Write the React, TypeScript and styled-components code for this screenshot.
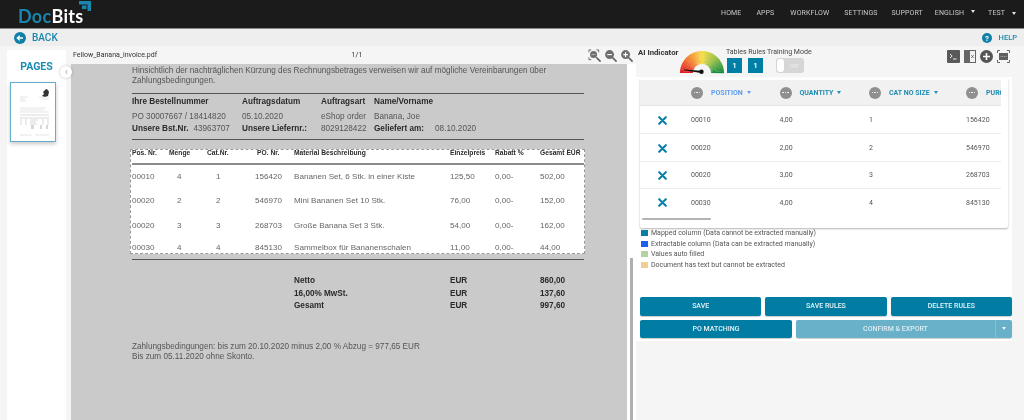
import React from 'react'
import styled, { createGlobalStyle } from 'styled-components'

const GlobalStyle = createGlobalStyle`
  html, body {
    margin: 0;
    padding: 0;
    background: #f5f5f5;
  }
  * {
    box-sizing: border-box;
  }
`

const Shell = styled.div`
  width: 1024px;
  height: 420px;
  overflow: hidden;
  display: flex;
  flex-direction: column;
  font-family: Roboto, "Liberation Sans", sans-serif;
  background: #f5f5f5;
  filter: blur(0.45px);
`

const TopBar = styled.header`
  height: 29px;
  flex-shrink: 0;
  display: flex;
  align-items: center;
  justify-content: space-between;
  padding: 0 8px 2px 18px;
  background: #1b1b1b;
  border-bottom: 1px solid #8a8a8a;
`

const Logo = styled.div`
  position: relative;
  font-family: Lato, "Liberation Sans", sans-serif;
  font-size: 18px;
  font-weight: 700;
  letter-spacing: 0.3px;
  line-height: 18px;
  margin-top: 5px;
  color: #fff;

  span {
    color: #1a86ad;
  }

  svg {
    position: absolute;
    top: -6px;
    right: -7px;
  }
`

const Nav = styled.nav`
  display: flex;
  align-items: center;
  color: #c8c8c8;
  font-size: 7px;
  letter-spacing: 0.1px;
`

const NavLink = styled.span<{ $gap: number }>`
  margin-left: ${({ $gap }) => $gap}px;
  display: flex;
  align-items: center;
`

const NavCaret = styled.i<{ $lift?: boolean }>`
  width: 0;
  height: 0;
  margin-left: 7px;
  margin-top: ${({ $lift }) => ($lift ? -4 : 0)}px;
  border-left: 2.5px solid transparent;
  border-right: 2.5px solid transparent;
  border-top: 3px solid #e4e4e4;
`

const SubBar = styled.div`
  height: 17px;
  flex-shrink: 0;
  display: flex;
  align-items: center;
  justify-content: space-between;
  padding: 0 7px 0 14px;
  background: #eeeeee;
`

const SubAction = styled.div<{ $small?: boolean }>`
  display: flex;
  align-items: center;
  gap: ${({ $small }) => ($small ? 7 : 6)}px;
  color: #1a86ad;
  font-size: ${({ $small }) => ($small ? 7.5 : 10)}px;
  font-weight: 500;
`

const Main = styled.main`
  flex: 1;
  min-height: 0;
  display: flex;
`

const Sidebar = styled.aside`
  position: relative;
  width: 59px;
  margin: 4px 0 0 7px;
  padding: 11px 3px 0;
  background: #ffffff;
  flex-shrink: 0;
`

const PagesTitle = styled.div`
  text-align: center;
  color: #1a8cb3;
  font-size: 10.5px;
  font-weight: 700;
  line-height: 12px;
  margin-bottom: 9px;
`

const Thumb = styled.div`
  width: 46px;
  height: 60px;
  background: #fff;
  border: 1px solid #63aecb;
  box-shadow: 0 2px 4px rgba(0, 0, 0, 0.22);

  svg {
    display: block;
  }
`

const Collapse = styled.button`
  position: absolute;
  top: 16px;
  right: -6px;
  width: 12px;
  height: 12px;
  padding: 0;
  border: none;
  border-radius: 50%;
  background: #fff;
  box-shadow: 0 0 3px rgba(0, 0, 0, 0.25);
  display: flex;
  align-items: center;
  justify-content: center;
  z-index: 1;
`

const DocColumn = styled.section`
  width: 565px;
  margin-left: 5px;
  flex-shrink: 0;
  display: flex;
  flex-direction: column;
`

const DocToolbar = styled.div`
  height: 18px;
  display: grid;
  grid-template-columns: 1fr 1fr 1fr;
  align-items: center;
  padding: 0 3px 0 2px;
  font-size: 7px;
  color: #333;
`

const PageCount = styled.span`
  text-align: center;
  margin-left: 8px;
`

const ZoomTools = styled.div`
  display: flex;
  justify-content: flex-end;
  gap: 3px;
`

const DocBody = styled.div`
  flex: 1;
  min-height: 0;
  display: flex;
  background: #ffffff;
`

const InvoicePage = styled.div`
  width: 556px;
  padding: 2px 43px 0 61px;
  background: #cacaca;
  font-family: "Liberation Sans", Arial, sans-serif;
  font-size: 8.2px;
  color: #555;
`

const PageScroll = styled.div`
  width: 3px;
  margin: 194px 0 0 3px;
  background: #b0b0b0;
`

const TextLine = styled.div`
  height: 10px;
  line-height: 10px;
  white-space: nowrap;
`

const Rule = styled.div<{ $top: number }>`
  height: 1px;
  margin-top: ${({ $top }) => $top}px;
  background: #555;
`

const InfoRow = styled.div<{ $top: number }>`
  display: grid;
  grid-template-columns: 110px 79px 53px 60px 1fr;
  height: 10px;
  line-height: 10px;
  margin-top: ${({ $top }) => $top}px;
  white-space: nowrap;
`

const Strong = styled.span`
  font-weight: 700;
  color: #2a2a2a;
`

const Inline = styled.span<{ $at: number }>`
  display: inline-block;
  margin-left: ${({ $at }) => $at}px;
`

const ExtractBox = styled.div`
  margin: 9px -1px 0 -2px;
  height: 105px;
  overflow: hidden;
  padding: 0 0 0 1px;
  background: #ffffff;
  border: 1px dashed #9a9a9a;
`

const LINE_COLUMNS = '37px 38px 48px 39px 156px 45px 45px 1fr'

const LineHead = styled.div`
  display: grid;
  grid-template-columns: ${LINE_COLUMNS};
  height: 6px;
  line-height: 6px;
  font-size: 6.7px;
  font-weight: 700;
  color: #2a2a2a;
  white-space: nowrap;
`

const LineRule = styled.div`
  height: 2px;
  margin-top: 7px;
  background: #8c8c8c;
`

const LineRow = styled.div`
  display: grid;
  grid-template-columns: ${LINE_COLUMNS};
  height: 24.3px;
  line-height: 24.3px;
  font-size: 8.1px;
  color: #666;
  white-space: nowrap;

  &:last-child {
    margin-top: -2px;
  }
`

const Indented = styled.span<{ $by: number }>`
  padding-left: ${({ $by }) => $by}px;
`

const Totals = styled.div`
  margin-top: 15px;
  display: grid;
  grid-template-columns: 162px 156px 90px 1fr;
  grid-auto-rows: 12.5px;
  line-height: 12.5px;
  font-weight: 700;
  color: #2a2a2a;
`

const Terms = styled.div`
  margin-top: 29px;
`

const RightColumn = styled.section`
  flex: 1;
  min-width: 0;
  display: flex;
  flex-direction: column;
`

const IndicatorBar = styled.div`
  height: 31px;
  flex-shrink: 0;
  display: flex;
  padding: 2px 14px 0 2px;
`

const IndicatorTitle = styled.div`
  width: 42px;
  font-size: 7.75px;
  font-weight: 700;
  line-height: 9px;
  color: #333;
  white-space: nowrap;
`

const Gauge = styled.svg`
  margin-top: 3px;
  flex-shrink: 0;
`

const Counters = styled.div`
  margin-left: 2px;
  width: 92px;
  flex-shrink: 0;
`

const CounterTitle = styled.div`
  font-size: 7px;
  color: #444;
  line-height: 9px;
  white-space: nowrap;
`

const CounterRow = styled.div`
  display: flex;
  align-items: center;
  margin: 1px 0 0 1px;
`

const CounterBox = styled.div`
  width: 15px;
  height: 15px;
  margin-right: 6px;
  background: #007fa6;
  color: #fff;
  font-size: 8px;
  font-weight: 500;
  display: flex;
  align-items: center;
  justify-content: center;
`

const ModeSwitch = styled.div`
  width: 28px;
  height: 15px;
  margin-left: 7px;
  padding: 1px;
  border-radius: 3px;
  background: #d6d6d6;
  color: #efefef;
  font-size: 5px;
  display: flex;
  align-items: center;

  &::before {
    content: '';
    width: 7px;
    height: 13px;
    margin-right: 6px;
    border-radius: 3px;
    background: #fff;
  }
`

const ActionIcons = styled.div`
  margin-left: auto;
  display: flex;
  align-items: flex-start;
  gap: 4px;
  padding-top: 2px;
`

const Panel = styled.div`
  width: 376px;
  padding: 1px 0 3px 4px;
  background: #ffffff;
`

const Card = styled.div`
  width: 368px;
  height: 150px;
  padding-top: 2px;
  background: #fff;
  border-radius: 2px;
  box-shadow: 0 1px 2px rgba(0, 0, 0, 0.3);
`

const Scroller = styled.div`
  width: 361px;
  overflow: hidden;
`

const COLUMNS = '51px 88.5px 89.5px 97px 35px'

const HeadRow = styled.div`
  display: grid;
  grid-template-columns: ${COLUMNS};
  height: 26px;
  align-items: center;
  background: #f1f1f1;
  border-bottom: 1px solid #e4e4e4;
`

const HeadCell = styled.div<{ $active?: boolean }>`
  display: flex;
  align-items: center;
  gap: 8px;
  font-size: 7px;
  font-weight: 700;
  white-space: nowrap;
  color: ${({ $active }) => ($active ? '#5c9cf2' : '#1f8db3')};
`

const Dots = styled.span`
  width: 12px;
  height: 12px;
  flex-shrink: 0;
  border-radius: 50%;
  background: #8f8f8f;
  display: flex;
  align-items: center;
  justify-content: center;
  gap: 1px;

  i {
    width: 1.5px;
    height: 1.5px;
    border-radius: 50%;
    background: #fff;
  }
`

const SortCaret = styled.i<{ $active?: boolean }>`
  width: 0;
  height: 0;
  margin-left: -4px;
  border-left: 2.5px solid transparent;
  border-right: 2.5px solid transparent;
  border-top: 3px solid ${({ $active }) => ($active ? '#5c9cf2' : '#1f8db3')};
`

const BodyRow = styled.div`
  display: grid;
  grid-template-columns: ${COLUMNS};
  height: 27.4px;
  align-items: center;
  padding-top: 1px;
  font-size: 7px;
  color: #555;

  & + & {
    border-top: 1px solid #ececec;
  }
`

const RemoveCell = styled.span`
  display: flex;
  padding-left: 18px;
`

const TableScroll = styled.div`
  width: 69px;
  height: 2px;
  margin: 2px 0 0 2px;
  background: #b4b4b4;
  border-radius: 1px;
`

const Legend = styled.ul`
  list-style: none;
  margin: 0;
  padding: 0 0 0 1px;
  height: 69px;
`

const LegendRow = styled.li`
  height: 10.5px;
  display: flex;
  align-items: center;
  gap: 3px;
  font-size: 7px;
  color: #555;
  white-space: nowrap;
`

const Swatch = styled.i<{ $color: string }>`
  width: 7px;
  height: 6px;
  background: ${({ $color }) => $color};
`

const ButtonRow = styled.div<{ $columns: string }>`
  display: grid;
  grid-template-columns: ${({ $columns }) => $columns};
  gap: 4px;
  width: 372px;
  margin-bottom: 4px;

  &:last-child {
    margin-bottom: 0;
  }
`

const Btn = styled.button`
  height: 18.5px;
  padding: 0;
  border: none;
  border-radius: 2px;
  font-family: inherit;
  font-size: 7px;
  font-weight: 500;
  color: #e6f3f7;
  background: #017ca3;
  box-shadow: 0 1px 1px rgba(0, 0, 0, 0.2);
`

const SplitBtn = styled.div`
  display: flex;
  height: 18.5px;
  border-radius: 2px;
  background: #69b0c9;
  box-shadow: 0 1px 1px rgba(0, 0, 0, 0.2);
  color: #dcecf2;
  font-size: 7px;
  font-weight: 500;
`

const SplitLabel = styled.span`
  flex: 1;
  display: flex;
  align-items: center;
  justify-content: center;
`

const SplitArrow = styled.span`
  width: 17px;
  display: flex;
  align-items: center;
  justify-content: center;
  border-left: 1px solid #86bfd3;

  &::after {
    content: '';
    border-left: 2.5px solid transparent;
    border-right: 2.5px solid transparent;
    border-top: 3px solid #e8f3f7;
  }
`

const lerp = (a: number[], b: number[], t: number) => a.map((v, i) => Math.round(v + (b[i] - v) * t))

// red -> orange -> yellow -> green along the dial
const gaugeColor = (t: number) => {
  const stops = [
    [226, 30, 38],
    [243, 128, 50],
    [248, 222, 74],
    [150, 190, 70],
    [20, 140, 60],
  ]
  const pos = t * (stops.length - 1)
  const i = Math.min(Math.floor(pos), stops.length - 2)
  const [r, g, b] = lerp(stops[i], stops[i + 1], pos - i)
  return `rgb(${r},${g},${b})`
}

const GaugeDial = () => {
  const wedges = Array.from({ length: 36 }, (_, i) => {
    const a0 = Math.PI - (Math.PI * i) / 36
    const a1 = Math.PI - (Math.PI * (i + 1.15)) / 36
    const pt = (r: number, a: number) => `${(22 + r * Math.cos(a)).toFixed(2)} ${(22 - r * Math.sin(a)).toFixed(2)}`
    return (
      <path
        key={i}
        d={`M${pt(22, a0)}A22 22 0 0 1 ${pt(22, a1)}L${pt(9, a1)}A9 9 0 0 0 ${pt(9, a0)}Z`}
        fill={gaugeColor(i / 35)}
      />
    )
  })
  return (
    <Gauge width="44" height="24" viewBox="0 0 44 24">
      {wedges}
      <path d="M4 18.5L21 19.8V22L4 19.2Z" fill="#111" />
      <circle cx="21.5" cy="20.8" r="2.2" fill="#111" />
    </Gauge>
  )
}

const ThumbArt = () => (
  <svg width="44" height="58" viewBox="0 0 44 58">
    <path d="M32 9l3-3 2 1 1 2-1 4-3 1-3-1 2-2z" fill="#333" />
    <g stroke="#b5b5b5" strokeWidth="0.35">
      <path d="M9 14h8M9 16h5M9 18h6M28 14h10M30 16h8" />
      <path d="M9 25h26M9 27h24M9 29h29" />
    </g>
    <g stroke="#a0a0a0" strokeWidth="0.4">
      <path d="M9 32h29M9 35h29" />
      <path d="M9 37h2M14 37h2M19 37h8M31 37h2M36 37h2" />
      <path d="M9 39h2M14 39h2M19 39h6M31 39h2M36 39h2" />
      <path d="M9 41h2M14 41h2M19 41h7M31 41h2M36 41h2" />
    </g>
    <g stroke="#777" strokeWidth="0.6">
      <path d="M20 43h3M29 43h2M35 43h2M20 45h3M29 45h2M35 45h2" />
    </g>
    <path d="M9 52h12M24 52h14" stroke="#b5b5b5" strokeWidth="0.35" />
  </svg>
)

const CrossIcon = () => (
  <svg width="9" height="9" viewBox="0 0 9 9">
    <path d="M1.2 1.2L7.8 7.8M7.8 1.2L1.2 7.8" stroke="#0a80a8" strokeWidth="2.1" strokeLinecap="round" />
  </svg>
)

const LensIcon = ({ kind }: { kind: 'fit' | 'minus' | 'plus' }) => (
  <svg width="13" height="13" viewBox="0 0 14 14">
    {kind === 'fit' && (
      <path d="M1 3.5V1h2.5M9 1h2.5v2.5M1 9v2.5h2.5" fill="none" stroke="#666" strokeWidth="1" />
    )}
    <circle cx="6" cy="6" r={kind === 'fit' ? 3.8 : 4.8} fill="#6f6f6f" />
    <path d="M9.5 9.5L13 13" stroke="#666" strokeWidth="1.8" strokeLinecap="round" />
    {kind === 'fit' ? (
      <path d="M4 6h4" stroke="#ddd" strokeWidth="1" strokeDasharray="1 .6" />
    ) : (
      <path d={kind === 'plus' ? 'M3.5 6h5M6 3.5v5' : 'M3.5 6h5'} stroke="#fff" strokeWidth="1.2" />
    )}
  </svg>
)

const TerminalIcon = () => (
  <svg width="13" height="13" viewBox="0 0 13 13">
    <rect width="13" height="13" rx="1" fill="#595959" />
    <path d="M3 4l2.2 2L3 8M6 9h3.5" fill="none" stroke="#fff" strokeWidth="0.9" />
  </svg>
)

const SplitDocIcon = () => (
  <svg width="12" height="13" viewBox="0 0 12 13">
    <rect width="12" height="13" fill="#666" />
    <rect x="6" y="1" width="5" height="11" fill="#f2f2f2" />
    <path d="M7.3 5.2l2.4 2.6M9.7 5.2L7.3 7.8" stroke="#555" strokeWidth="0.8" />
  </svg>
)

const PlusCircleIcon = () => (
  <svg width="13" height="13" viewBox="0 0 13 13">
    <circle cx="6.5" cy="6.5" r="6.5" fill="#555" />
    <path d="M3 6.5h7M6.5 3v7" stroke="#fff" strokeWidth="1.6" />
  </svg>
)

const ScanIcon = () => (
  <svg width="13" height="13" viewBox="0 0 13 13">
    <path d="M.5 3V.5H3M10 .5h2.5V3M.5 10v2.5H3M10 12.5h2.5V10" fill="none" stroke="#666" strokeWidth="1" />
    <rect x="2" y="3" width="9" height="7" fill="#5f5f5f" />
    <path d="M3.5 6.5h6" stroke="#bbb" strokeWidth="0.8" strokeDasharray="1 .7" />
  </svg>
)

const lineItems = [
  ['00010', '4', '1', '156420', 'Bananen Set, 6 Stk. in einer Kiste', '125,50', '0,00-', '502,00'],
  ['00020', '2', '2', '546970', 'Mini Bananen Set 10 Stk.', '76,00', '0,00-', '152,00'],
  ['00020', '3', '3', '268703', 'Große Banana Set 3 Stk.', '54,00', '0,00-', '162,00'],
  ['00030', '4', '4', '845130', 'Sammelbox für Bananenschalen', '11,00', '0,00-', '44,00'],
]

const mappedRows = [
  ['00010', '4,00', '1', '156420'],
  ['00020', '2,00', '2', '546970'],
  ['00020', '3,00', '3', '268703'],
  ['00030', '4,00', '4', '845130'],
]

const legend = [
  ['#0a7fa6', 'Mapped column (Data cannot be extracted manually)'],
  ['#1f5ff0', 'Extractable column (Data can be extracted manually)'],
  ['#b5d3a0', 'Values auto filled'],
  ['#f0cf94', 'Document has text but cannot be extracted'],
]

export default function App() {
  return (
    <Shell>
      <GlobalStyle />
      <TopBar>
        <Logo>
          <span>Doc</span>Bits
          <svg width="12" height="10" viewBox="0 0 12 10">
            <path d="M0 0H12V10H8.5V3.5H0Z" fill="#1a86ad" />
            <path d="M3 4.5H7.5V8H3Z" fill="#1a86ad" />
          </svg>
        </Logo>
        <Nav>
          <NavLink $gap={0}>HOME</NavLink>
          <NavLink $gap={15}>APPS</NavLink>
          <NavLink $gap={16}>WORKFLOW</NavLink>
          <NavLink $gap={15}>SETTINGS</NavLink>
          <NavLink $gap={14}>SUPPORT</NavLink>
          <NavLink $gap={12}>
            ENGLISH
            <NavCaret $lift />
          </NavLink>
          <NavLink $gap={13}>
            TEST
            <NavCaret />
          </NavLink>
        </Nav>
      </TopBar>

      <SubBar>
        <SubAction>
          <svg width="12" height="12" viewBox="0 0 12 12">
            <circle cx="6" cy="6" r="6" fill="#0f7fa8" />
            <path d="M9 6H3.5M5.8 3.6L3.3 6l2.5 2.4" fill="none" stroke="#fff" strokeWidth="1.3" />
          </svg>
          BACK
        </SubAction>
        <SubAction $small>
          <svg width="10" height="10" viewBox="0 0 10 10">
            <circle cx="5" cy="5" r="5" fill="#0f7fa8" />
            <text x="5" y="7.8" textAnchor="middle" fontSize="8" fontWeight="700" fill="#fff" fontFamily="Roboto">
              ?
            </text>
          </svg>
          HELP
        </SubAction>
      </SubBar>

      <Main>
        <Sidebar>
          <PagesTitle>PAGES</PagesTitle>
          <Thumb>
            <ThumbArt />
          </Thumb>
          <Collapse aria-label="Collapse pages">
            <svg width="5" height="6" viewBox="0 0 5 6">
              <path d="M3.5 1L1.5 3l2 2" fill="none" stroke="#999" strokeWidth="0.8" />
            </svg>
          </Collapse>
        </Sidebar>

        <DocColumn>
          <DocToolbar>
            <span>Fellow_Banana_invoice.pdf</span>
            <PageCount>1/1</PageCount>
            <ZoomTools>
              <LensIcon kind="fit" />
              <LensIcon kind="minus" />
              <LensIcon kind="plus" />
            </ZoomTools>
          </DocToolbar>
          <DocBody>
            <InvoicePage>
              <TextLine>
                Hinsichtlich der nachträglichen Kürzung des Rechnungsbetrages verweisen wir auf mögliche Vereinbarungen über
              </TextLine>
              <TextLine>Zahlungsbedingungen.</TextLine>
              <Rule $top={7} />
              <InfoRow $top={3}>
                <Strong>Ihre Bestellnummer</Strong>
                <Strong>Auftragsdatum</Strong>
                <Strong>Auftragsart</Strong>
                <Strong>Name/Vorname</Strong>
              </InfoRow>
              <InfoRow $top={5}>
                <span>PO 30007667 / 18414820</span>
                <span>05.10.2020</span>
                <span>eShop order</span>
                <span>Banana, Joe</span>
              </InfoRow>
              <InfoRow $top={2}>
                <span>
                  <Strong>Unsere Bst.Nr.</Strong>
                  <Inline $at={5}>43963707</Inline>
                </span>
                <Strong>Unsere Liefernr.:</Strong>
                <span>8029128422</span>
                <span>
                  <Strong>Geliefert am:</Strong>
                  <Inline $at={11}>08.10.2020</Inline>
                </span>
              </InfoRow>
              <Rule $top={5} />
              <ExtractBox>
                <LineHead>
                  <span>Pos. Nr.</span>
                  <span>Menge</span>
                  <span>Cat.Nr.</span>
                  <Indented $by={2}>PO. Nr.</Indented>
                  <span>Material Beschreibung</span>
                  <span>Einzelpreis</span>
                  <span>Rabatt %</span>
                  <span>Gesamt EUR</span>
                </LineHead>
                <LineRule />
                {lineItems.map((row) => (
                  <LineRow key={row[0] + row[3]}>
                    <span>{row[0]}</span>
                    <Indented $by={8}>{row[1]}</Indented>
                    <Indented $by={9}>{row[2]}</Indented>
                    <span>{row[3]}</span>
                    <span>{row[4]}</span>
                    <span>{row[5]}</span>
                    <span>{row[6]}</span>
                    <span>{row[7]}</span>
                  </LineRow>
                ))}
              </ExtractBox>
              <Rule $top={5} />
              <Totals>
                <span />
                <span>Netto</span>
                <span>EUR</span>
                <span>860,00</span>
                <span />
                <span>16,00% MwSt.</span>
                <span>EUR</span>
                <span>137,60</span>
                <span />
                <span>Gesamt</span>
                <span>EUR</span>
                <span>997,60</span>
              </Totals>
              <Terms>
                <TextLine>Zahlungsbedingungen: bis zum 20.10.2020 minus 2,00 % Abzug = 977,65 EUR</TextLine>
                <TextLine>Bis zum 05.11.2020 ohne Skonto.</TextLine>
              </Terms>
            </InvoicePage>
            <PageScroll />
          </DocBody>
        </DocColumn>

        <RightColumn>
          <IndicatorBar>
            <IndicatorTitle>AI Indicator</IndicatorTitle>
            <GaugeDial />
            <Counters>
              <CounterTitle>Tables Rules Training Mode</CounterTitle>
              <CounterRow>
                <CounterBox>1</CounterBox>
                <CounterBox>1</CounterBox>
                <ModeSwitch>OFF</ModeSwitch>
              </CounterRow>
            </Counters>
            <ActionIcons>
              <TerminalIcon />
              <SplitDocIcon />
              <PlusCircleIcon />
              <ScanIcon />
            </ActionIcons>
          </IndicatorBar>

          <Panel>
            <Card>
              <Scroller>
                <HeadRow>
                  <span />
                  <HeadCell $active>
                    <Dots>
                      <i />
                      <i />
                      <i />
                    </Dots>
                    <span>POSITION</span>
                    <SortCaret $active />
                  </HeadCell>
                  <HeadCell>
                    <Dots>
                      <i />
                      <i />
                      <i />
                    </Dots>
                    <span>QUANTITY</span>
                    <SortCaret />
                  </HeadCell>
                  <HeadCell>
                    <Dots>
                      <i />
                      <i />
                      <i />
                    </Dots>
                    <span>CAT NO SIZE</span>
                    <SortCaret />
                  </HeadCell>
                  <HeadCell>
                    <Dots>
                      <i />
                      <i />
                      <i />
                    </Dots>
                    <span>PURCHASE</span>
                  </HeadCell>
                </HeadRow>
                {mappedRows.map((row) => (
                  <BodyRow key={row[0] + row[3]}>
                    <RemoveCell>
                      <CrossIcon />
                    </RemoveCell>
                    <span>{row[0]}</span>
                    <span>{row[1]}</span>
                    <span>{row[2]}</span>
                    <span>{row[3]}</span>
                  </BodyRow>
                ))}
                <TableScroll />
              </Scroller>
            </Card>

            <Legend>
              {legend.map(([color, label]) => (
                <LegendRow key={label}>
                  <Swatch $color={color} />
                  {label}
                </LegendRow>
              ))}
            </Legend>

            <ButtonRow $columns="1fr 1fr 1fr">
              <Btn>SAVE</Btn>
              <Btn>SAVE RULES</Btn>
              <Btn>DELETE RULES</Btn>
            </ButtonRow>
            <ButtonRow $columns="152px 1fr">
              <Btn>PO MATCHING</Btn>
              <SplitBtn>
                <SplitLabel>CONFIRM &amp; EXPORT</SplitLabel>
                <SplitArrow />
              </SplitBtn>
            </ButtonRow>
          </Panel>
        </RightColumn>
      </Main>
    </Shell>
  )
}
